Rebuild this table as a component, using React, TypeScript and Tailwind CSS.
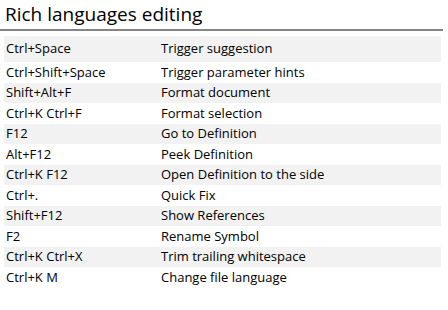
import React from "react";

const rows: [string, string][] = [
  ["Ctrl+Space", "Trigger suggestion"],
  ["Ctrl+Shift+Space", "Trigger parameter hints"],
  ["Shift+Alt+F", "Format document"],
  ["Ctrl+K Ctrl+F", "Format selection"],
  ["F12", "Go to Definition"],
  ["Alt+F12", "Peek Definition"],
  ["Ctrl+K F12", "Open Definition to the side"],
  ["Ctrl+.", "Quick Fix"],
  ["Shift+F12", "Show References"],
  ["F2", "Rename Symbol"],
  ["Ctrl+K Ctrl+X", "Trim trailing whitespace"],
  ["Ctrl+K M", "Change file language"],
];

export default function App() {
  return (
    <div
      className="w-[448px] h-[310px] bg-white text-black overflow-hidden"
      style={{ fontFamily: '"Open Sans", "Noto Sans", sans-serif' }}
    >
      <div className="w-[443px] h-[31px] border-b-2 border-[#858585] pl-[5px] pt-[1px] text-[19px] leading-[26px] text-black">
        Rich languages editing
      </div>
      <div className="mt-[5px] ml-[4px] w-[437px] flex flex-col text-[13px]">
        {rows.map(([k, d], i) => (
          <div
            key={k}
            className={
              "flex items-center " +
              (i === 0 ? "h-[26px] " : "h-[20.5px] ") +
              (i % 2 === 0 ? "bg-[#f2f2f2]" : "bg-white")
            }
          >
            <div className="w-[157px] pl-[2px] whitespace-nowrap">{k}</div>
            <div className="whitespace-nowrap">{d}</div>
          </div>
        ))}
      </div>
    </div>
  );
}
